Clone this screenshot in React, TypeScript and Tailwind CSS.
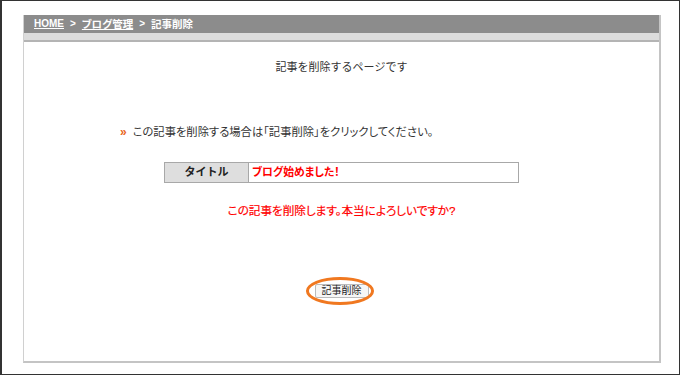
import React from 'react';

const font = "font-['Liberation_Sans','Noto_Sans_CJK_JP',sans-serif]";

export default function App() {
  return (
    <div className={`w-[680px] h-[375px] bg-white border border-l-2 border-[#333] pt-[14px] pl-[21px] ${font}`}>
      <div className="w-[638px] h-[348px] flex flex-col border-l border-r-2 border-b-2 border-[#c4c4c4] border-l-[#d0d0d0]">
        {/* breadcrumb */}
        <div className="h-[18px] bg-[#8c8c8c] flex items-center pl-[10px] text-[10.5px] font-bold text-white leading-none gap-[6px] [font-feature-settings:'palt']">
          <span className="underline text-[10px]">HOME</span>
          <span className="text-[10px]">&gt;</span>
          <span className="underline">ブログ管理</span>
          <span className="text-[10px]">&gt;</span>
          <span>記事削除</span>
        </div>
        <div className="h-[9px] bg-[#dcdcdc] border-b-2 border-[#b4b4b4]" />

        <div className="flex flex-col items-center text-[11px] text-[#333]">
          <p className="mt-[18px] leading-[14px]">記事を削除するページです</p>

          <p className="self-start ml-[96px] mt-[51px] leading-[14px] flex items-center text-[11.3px] [font-feature-settings:'palt']">
            <span className="text-[#e8641b] font-bold mr-[6px] text-[12px]">»</span>
            この記事を削除する場合は「記事削除」をクリックしてください。
          </p>

          <div className="mt-[23px] flex w-[355px] h-[21px] border border-[#a8a8a8]">
            <div className="w-[84px] bg-[#dedede] border-r border-[#a8a8a8] flex items-center justify-center font-bold text-[#222]">
              タイトル
            </div>
            <div className="flex-1 flex items-center pl-[3px] font-bold text-[#ff0000] text-[10.8px] [font-feature-settings:'palt']">
              ブログ始めました！
            </div>
          </div>

          <p className="mt-[21px] leading-[14px] text-[#ff0000] text-[11.6px] [font-feature-settings:'palt'] [-webkit-text-stroke:0.2px_#ff0000]">
            この記事を削除します。本当によろしいですか?
          </p>

          <div className="mt-[64px] relative">
            <button className="h-[14px] px-[6px] text-[10px] leading-none text-[#222] bg-[#f6f6f6] border border-[#bbb] rounded-[2px]">
              記事削除
            </button>
            <div className="absolute left-[-9px] right-[-5px] top-[-5px] bottom-[-6px] rounded-[50%] border-[3px] border-[#f07820] pointer-events-none" />
          </div>
        </div>
      </div>
    </div>
  );
}
